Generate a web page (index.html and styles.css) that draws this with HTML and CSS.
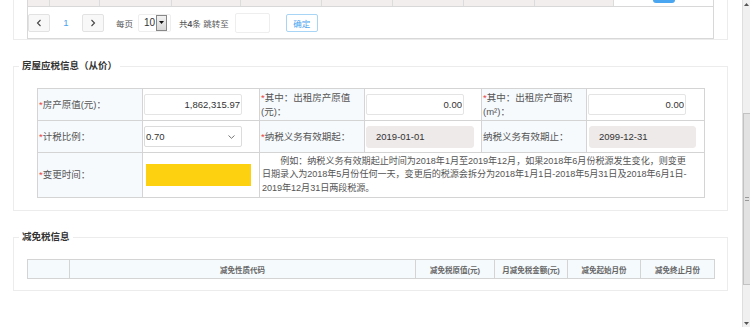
FILE: index.html
```html
<!DOCTYPE html>
<html lang="zh-CN">
<head>
    <meta charset="UTF-8">
    <meta name="viewport" content="width=device-width, initial-scale=1.0">
    <title>房产税源信息</title>
    <link rel="stylesheet" href="styles.css">
</head>
<body>
    <div class="screen">
        <div class="page">
            <!-- list panel (scrolled, only the pager is visible) -->
            <div class="panel panel-list">
                <div class="grid">
                    <div class="grid-row">
                        <div class="cell"></div>
                        <div class="cell"></div>
                        <div class="cell"></div>
                        <div class="cell"></div>
                        <div class="cell"></div>
                        <div class="cell"></div>
                        <div class="cell"></div>
                        <div class="cell"></div>
                        <div class="cell"></div>
                        <div class="cell cell-op"><span class="op-btn"></span></div>
                    </div>
                    <div class="pager">
                        <button class="pg-btn">
                            <svg width="6" height="8" viewBox="0 0 6 8"><path d="M4.5 1 L1.5 4 L4.5 7" fill="none" stroke="#444" stroke-width="1.1"/></svg>
                        </button>
                        <span class="pg-num">1</span>
                        <button class="pg-btn">
                            <svg width="6" height="8" viewBox="0 0 6 8"><path d="M1.5 1 L4.5 4 L1.5 7" fill="none" stroke="#444" stroke-width="1.1"/></svg>
                        </button>
                        <span class="pg-text pg-size">每页</span>
                        <div class="pg-select">
                            <span>10</span>
                            <span class="pg-drop">
                                <svg width="5" height="3" viewBox="0 0 5 3"><path d="M0 0 H5 L2.5 3 Z" fill="#111"/></svg>
                            </span>
                        </div>
                        <span class="pg-text pg-total">共<b>4</b>条 跳转至</span>
                        <input type="text" class="pg-jump">
                        <button class="pg-go">确定</button>
                    </div>
                </div>
            </div>

            <!-- 房屋应税信息 -->
            <div class="panel">
                <div class="panel-title">房屋应税信息（从价）</div>
                <table class="form-table">
                    <colgroup>
                        <col style="width: 105px">
                        <col style="width: 117px">
                        <col style="width: 105px">
                        <col style="width: 117px">
                        <col style="width: 105px">
                        <col style="width: 118px">
                    </colgroup>
                    <tr class="row-a">
                        <td class="label"><i>*</i>房产原值(元)：</td>
                        <td class="value"><input type="text" class="ipt num" value="1,862,315.97" readonly></td>
                        <td class="label"><i>*</i>其中：出租房产原值<br>(元)：</td>
                        <td class="value"><input type="text" class="ipt num" value="0.00" readonly></td>
                        <td class="label"><i>*</i>其中：出租房产面积<br>(m²)：</td>
                        <td class="value"><input type="text" class="ipt num" value="0.00" readonly></td>
                    </tr>
                    <tr class="row-b">
                        <td class="label"><i>*</i>计税比例：</td>
                        <td class="value">
                            <div class="sel">
                                <span>0.70</span>
                                <svg width="7" height="4" viewBox="0 0 7 4"><path d="M0.5 0.5 L3.5 3.3 L6.5 0.5" fill="none" stroke="#666" stroke-width="0.9"/></svg>
                            </div>
                        </td>
                        <td class="label"><i>*</i>纳税义务有效期起：</td>
                        <td class="value"><input type="text" class="ipt ipt-off" value="2019-01-01" disabled></td>
                        <td class="label">纳税义务有效期止：</td>
                        <td class="value"><input type="text" class="ipt ipt-off ipt-end" value="2099-12-31" disabled></td>
                    </tr>
                    <tr class="row-c">
                        <td class="label"><i>*</i>变更时间：</td>
                        <td class="value"><div class="date-mark"></div></td>
                        <td class="note" colspan="4">例如：纳税义务有效期起止时间为2018年1月至2019年12月，如果2018年6月份税源发生变化，则变更<br>日期录入为2018年5月份任何一天，变更后的税源会拆分为2018年1月1日-2018年5月31日及2018年6月1日-<br>2019年12月31日两段税源。</td>
                    </tr>
                </table>
            </div>

            <!-- 减免税信息 -->
            <div class="panel panel-last">
                <div class="panel-title">减免税信息</div>
                <table class="list-table">
                    <colgroup>
                        <col style="width: 42px">
                        <col style="width: 346px">
                        <col style="width: 79px">
                        <col style="width: 73px">
                        <col style="width: 73px">
                        <col style="width: 74px">
                    </colgroup>
                    <tr>
                        <th></th>
                        <th>减免性质代码</th>
                        <th>减免税原值(元)</th>
                        <th>月减免税金额(元)</th>
                        <th>减免起始月份</th>
                        <th>减免终止月份</th>
                    </tr>
                </table>
            </div>
        </div>

        <div class="scrollbar">
            <span class="sb-arrow">
                <svg width="5" height="3" viewBox="0 0 5 3"><path d="M0 3 H5 L2.5 0 Z" fill="#555"/></svg>
            </span>
            <div class="sb-track"><div class="sb-thumb"><span class="sb-grip"></span></div></div>
            <span class="sb-arrow">
                <svg width="5" height="3" viewBox="0 0 5 3"><path d="M0 0 H5 L2.5 3 Z" fill="#555"/></svg>
            </span>
        </div>
    </div>
</body>
</html>
```

FILE: styles.css
```css
* {
    box-sizing: border-box;
}
html, body {
    margin: 0;
    padding: 0;
    height: 100%;
    overflow: hidden;
}
body {
    font-family: "Liberation Sans", "Noto Sans CJK SC", sans-serif;
    font-size: 9.5px;
    color: #555;
    background-color: #fff;
    text-spacing-trim: space-all;
}
.screen {
    display: flex;
    height: 327px;
}
.page {
    flex: 1;
    min-width: 0;
}

/* panels */
.panel {
    margin: 26px 14px 0 13px;
    border: 1px solid #ececec;
    padding: 0 13px 12px;
}
.panel-list {
    margin-top: -23px;
    padding-bottom: 0;
}
.panel-last {
    padding-bottom: 11px;
}
.panel-title {
    width: max-content;
    margin: -9px 0 0 -8px;
    padding: 0 3px;
    line-height: 16px;
    background-color: #fff;
    color: #333;
    font-weight: bold;
}

/* list grid + pager */
.grid {
    border: 1px solid #d8d8d8;
    border-top: none;
}
.grid-row {
    display: grid;
    grid-template-columns: 22px 50px 72px 69px 81px 71px 71px 71px 79px 1fr;
    height: 29px;
    border-bottom: 1px solid #d8d8d8;
}
.cell {
    background-color: #f2eeee;
    border-right: 1px solid #dcdcdc;
}
.cell-op {
    background-color: #fff;
    border-right: none;
    display: flex;
    justify-content: center;
    align-items: flex-end;
    padding-bottom: 3px;
}
.op-btn {
    width: 22px;
    height: 18px;
    border-radius: 3px;
    background-color: #4aa6f0;
}
.pager {
    display: flex;
    align-items: center;
    height: 31px;
    padding-left: 0;
    font-size: 8.5px;
}
.pg-btn {
    width: 22px;
    height: 18px;
    padding: 0;
    border: 1px solid #e2e2e2;
    border-radius: 2px;
    background-color: #f8f8f8;
    display: flex;
    align-items: center;
    justify-content: center;
}
.pg-num {
    width: 32px;
    text-align: center;
    color: #4aa3ef;
    font-size: 9.5px;
}
.pg-text {
    color: #555;
}
.pg-size {
    margin-left: 12px;
}
.pg-select {
    margin-left: 5px;
    width: 33px;
    height: 18px;
    border: 1px solid #eee;
    border-radius: 2px;
    display: flex;
    align-items: center;
    padding-left: 5px;
    font-size: 10px;
    color: #333;
}
.pg-drop {
    width: 11px;
    height: 16px;
    margin-left: 1px;
    border: 1px solid #888;
    background: linear-gradient(#f2f2f2, #d8d8d8);
    display: flex;
    align-items: center;
    justify-content: center;
}
.pg-total {
    margin-left: 8px;
}
.pg-jump {
    margin-left: 6px;
    width: 35px;
    height: 20px;
    border: 1px solid #eee;
    border-radius: 2px;
}
.pg-go {
    margin-left: 16px;
    width: 32px;
    height: 18px;
    padding: 0;
    border: 1px solid #a8d4f6;
    border-radius: 2px;
    background-color: #fff;
    color: #4aa3ef;
    font-family: inherit;
    font-size: 8.5px;
}

/* form table */
.form-table {
    width: 667px;
    margin: 14px 10px 0;
    border-collapse: collapse;
    table-layout: fixed;
}
.form-table td {
    border: 1px solid #d4d4d4;
    padding: 0 2px;
    vertical-align: middle;
}
.form-table .row-a td,
.form-table .row-b td {
    height: 32px;
}
.form-table .row-c td {
    height: 45px;
}
.form-table .label {
    background-color: #f6fafd;
    padding-left: 1px;
    line-height: 13.5px;
    color: #555;
}
.label i {
    font-style: normal;
    color: #e8473f;
}
.form-table .value {
    padding-left: 1px;
}
.ipt {
    display: block;
    width: 98px;
    height: 21px;
    border: 1px solid #e4e4e4;
    border-radius: 2px;
    background-color: #fff;
    font-family: inherit;
    font-size: 9.5px;
    color: #333;
    padding: 0 1px 0 4px;
}
.ipt.num {
    text-align: right;
}
.ipt-off {
    width: 108px;
    height: 22px;
    border-color: #eeeaea;
    border-radius: 3px;
    background-color: #eeeaea;
    padding-left: 9px;
    color: #333;
}
.ipt-end {
    margin-left: 1px;
    width: 107px;
}
.sel {
    width: 98px;
    height: 21px;
    border: 1px solid #dcdcdc;
    border-radius: 2px;
    display: flex;
    align-items: center;
    justify-content: space-between;
    padding: 0 6px 0 1px;
    color: #333;
}
.date-mark {
    margin-left: 2px;
    width: 105px;
    height: 22px;
    background-color: #fdd10f;
}
.form-table .note {
    padding: 1px 1px 1px 2px;
    font-size: 9.1px;
    letter-spacing: -0.05px;
    text-indent: 2em;
    line-height: 13.5px;
    color: #555;
}

/* list table */
.list-table {
    width: 687px;
    margin-top: 14px;
    border-collapse: collapse;
    table-layout: fixed;
}
.list-table th {
    height: 19px;
    padding: 0;
    border: 1px solid #d4d4d4;
    background-color: #f5fafd;
    font-size: 7.5px;
    font-weight: bold;
    color: #666;
    text-align: center;
}

/* scrollbar */
.scrollbar {
    width: 8px;
    display: flex;
    flex-direction: column;
    background-color: #f0f0f0;
    border-left: 1px solid #dedede;
}
.sb-arrow {
    height: 8px;
    display: flex;
    align-items: center;
    justify-content: center;
}
.sb-track {
    flex: 1;
    padding: 105px 0 34px;
}
.sb-thumb {
    height: 100%;
    background-color: #e2e2e2;
    border: 1px solid #c2c2c2;
    border-right: none;
    display: flex;
    align-items: center;
    justify-content: center;
}
.sb-grip {
    width: 4px;
    height: 4px;
    border-top: 1px solid #999;
    border-bottom: 1px solid #999;
}
```
